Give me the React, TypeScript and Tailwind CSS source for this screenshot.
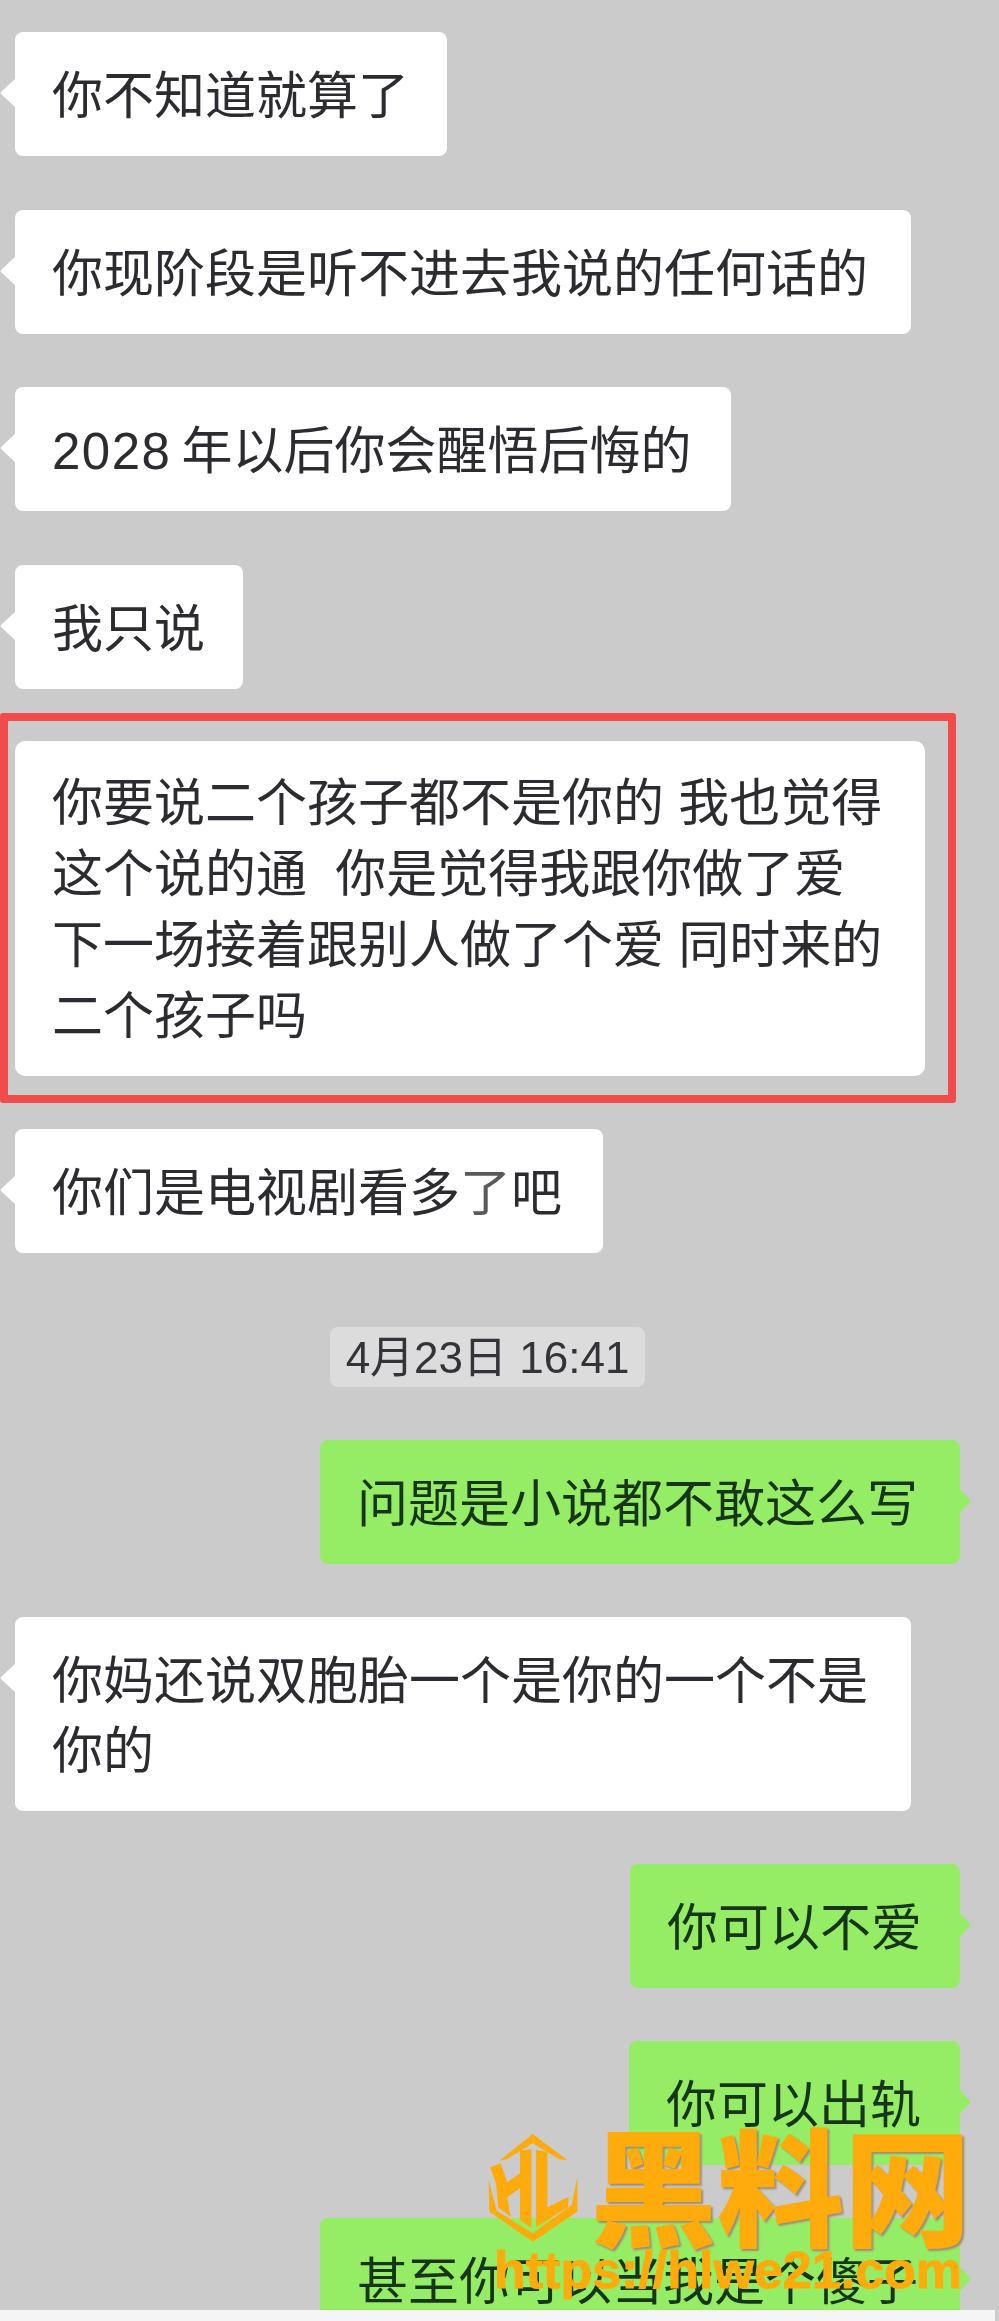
import type { ReactNode } from 'react';

const fontStack = "font-['Liberation_Sans','Noto_Sans_CJK_SC','Noto_Sans_CJK_JP',sans-serif]";

function Tail({ side, color }: { side: 'left' | 'right'; color: string }) {
  if (side === 'left') {
    return (
      <svg className="absolute left-[-15px] top-[46px]" width="16" height="30" viewBox="0 0 16 30">
        <path d="M16 0 L1 14 Q0 15 1 16 L16 30 Z" fill={color} />
      </svg>
    );
  }
  return (
    <svg className="absolute right-[-12px] top-[47px]" width="13" height="28" viewBox="0 0 13 28">
      <path d="M0 1 L11 13 Q12 14 11 15 L0 27 Z" fill={color} />
    </svg>
  );
}

function Bubble({ width, lines, me }: { width: string; lines: ReactNode[]; me?: boolean }) {
  return (
    <div
      className={`relative rounded-[8px] px-[37px] pb-[24px] pt-[30px] text-[51px] leading-[70px] whitespace-pre ${width} ${
        me ? 'self-end bg-[#95ed66] text-[#17351b]' : 'self-start bg-white text-[#2b2b30]'
      }`}
    >
      <Tail side={me ? 'right' : 'left'} color={me ? '#95ed66' : '#ffffff'} />
      {lines.map((line, i) => (
        <div key={i}>{line}</div>
      ))}
    </div>
  );
}

export default function App() {
  return (
    <div className={`relative h-[2321px] w-[999px] overflow-hidden bg-[#cbcbcb] blur-[0.6px] ${fontStack}`}>
      <div className="flex flex-col pl-[15px] pr-[39px] pt-[32px]">
        <div className="flex flex-col gap-[53.5px]">
          <Bubble width="w-[432px]" lines={['你不知道就算了']} />
          <Bubble width="w-[896px]" lines={['你现阶段是听不进去我说的任何话的']} />
          <Bubble
            width="w-[716px]"
            lines={[
              <>
                <span className="mr-[10px] tracking-[1.5px]">2028</span>年以后你会醒悟后悔的
              </>,
            ]}
          />
          <Bubble width="w-[228px]" lines={['我只说']} />
        </div>

        {/* red highlight box */}
        <div className="ml-[-15px] mt-[24.5px] w-[956px] rounded-[3px] border-[8px] border-[#f24b4b] pb-[19px] pl-[7px] pt-[20px]">
          <div className="w-[910px] rounded-[10px] bg-white px-[37px] pb-[24px] pt-[27px] text-[51px] leading-[71px] text-[#2b2b30] whitespace-pre">
            <div>你要说二个孩子都不是你的 我也觉得</div>
            <div>这个说的通  你是觉得我跟你做了爱</div>
            <div>下一场接着跟别人做了个爱 同时来的</div>
            <div>二个孩子吗</div>
          </div>
        </div>

        <div className="mt-[26px] flex flex-col">
          <Bubble
            width="w-[588px]"
            lines={[
              <>
                你们是电视剧看多<span className="text-[#5a5a5e]">了</span>吧
              </>,
            ]}
          />
        </div>

        <div className="ml-[315px] mt-[74px] flex h-[60px] w-[315px] items-center justify-center self-start rounded-[8px] bg-[#dcdcdc] pt-[2px] text-[44px] text-[#333338] whitespace-pre">
          4月23日 16:41
        </div>

        <div className="mt-[53px] flex flex-col gap-[53px]">
          <Bubble me width="w-[640px]" lines={['问题是小说都不敢这么写']} />
          <Bubble width="w-[896px]" lines={['你妈还说双胞胎一个是你的一个不是', '你的']} />
          <Bubble me width="w-[330px]" lines={['你可以不爱']} />
          <Bubble me width="w-[331px]" lines={['你可以出轨']} />
          <Bubble me width="w-[640px]" lines={['甚至你可以当我是个傻子']} />
        </div>
      </div>

      {/* bottom strip of the next screen */}
      <div className="absolute bottom-0 left-0 h-[11px] w-[995px] bg-[#f5f5f5]" />

      {/* watermark */}
      <svg className="absolute left-[470px] top-[2120px]" width="200" height="140" viewBox="0 0 600 420">
        <g fill="#ffab0b">
          <path d="M88 122 L188 42 L292 120 L268 118 L188 70 L110 118 Z" />
          <path d="M60 142 L92 130 L112 186 L150 160 L150 92 L184 88 L184 325 L150 300 L150 205 L112 232 L122 290 L85 262 L78 190 Z" />
          <path d="M198 90 L232 95 L232 262 L296 230 L294 262 L198 322 Z" />
          <path d="M56 180 L80 272 L188 340 L305 255 L322 170 L322 275 L188 365 L58 275 Z" />
        </g>
      </svg>
      <div className="absolute left-[590px] top-[2118px] text-[127px] font-black leading-[150px] text-[#ffab0b] whitespace-pre [text-shadow:2px_2px_2px_#9c8f78]">
        黑料网
      </div>
      <div className="absolute left-[494px] top-[2242px] text-[52px] font-bold leading-[56px] text-[#ffab0b] whitespace-pre [-webkit-text-stroke:1px_#ffab0b]">
        https://hlwe21.com
      </div>
    </div>
  );
}
